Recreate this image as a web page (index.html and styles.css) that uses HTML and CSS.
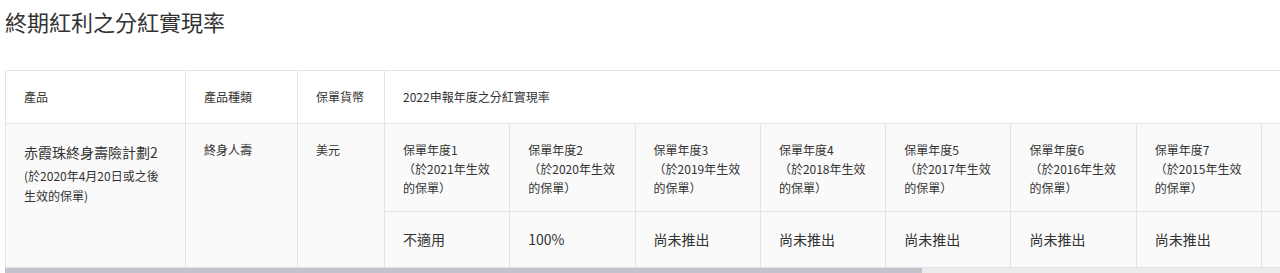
FILE: index.html
```html
<!DOCTYPE html>
<html lang="zh-Hant">
<head>
<meta charset="utf-8">
<title>終期紅利之分紅實現率</title>
<link rel="stylesheet" href="styles.css">
</head>
<body>
<h2 class="title">終期紅利之分紅實現率</h2>
<div class="scroller">
  <table class="rates">
    <colgroup>
      <col class="c-prod"><col class="c-type"><col class="c-cur">
      <col class="c-yr"><col class="c-yr"><col class="c-yr"><col class="c-yr"><col class="c-yr"><col class="c-yr"><col class="c-yr"><col class="c-yr"><col class="c-yr"><col class="c-yr"><col class="c-last">
    </colgroup>
    <thead>
      <tr>
        <th>產品</th>
        <th>產品種類</th>
        <th>保單貨幣</th>
        <th colspan="11">2022申報年度之分紅實現率</th>
      </tr>
    </thead>
    <tbody>
      <tr class="yr-row">
        <td rowspan="2" class="prod">
          <div class="prod-name">赤霞珠終身壽險計劃2</div>
          <div class="prod-note">(於2020年4月20日或之後生效的保單)</div>
        </td>
        <td rowspan="2" class="meta">終身人壽</td>
        <td rowspan="2" class="meta">美元</td>
        <td class="yr">保單年度1<br>（於2021年生效的保單）</td>
        <td class="yr">保單年度2<br>（於2020年生效的保單）</td>
        <td class="yr">保單年度3<br>（於2019年生效的保單）</td>
        <td class="yr">保單年度4<br>（於2018年生效的保單）</td>
        <td class="yr">保單年度5<br>（於2017年生效的保單）</td>
        <td class="yr">保單年度6<br>（於2016年生效的保單）</td>
        <td class="yr">保單年度7<br>（於2015年生效的保單）</td>
        <td class="yr">保單年度8<br>（於2014年生效的保單）</td>
        <td class="yr">保單年度9<br>（於2013年生效的保單）</td>
        <td class="yr">保單年度10<br>（於2012年生效的保單）</td>
        <td class="yr">保單年度11<br>（於2011年生效的保單）</td>
      </tr>
      <tr class="val-row">
        <td class="val">不適用</td>
        <td class="val">100%</td>
        <td class="val">尚未推出</td>
        <td class="val">尚未推出</td>
        <td class="val">尚未推出</td>
        <td class="val">尚未推出</td>
        <td class="val">尚未推出</td>
        <td class="val">尚未推出</td>
        <td class="val">尚未推出</td>
        <td class="val">尚未推出</td>
        <td class="val">尚未推出</td>
      </tr>
    </tbody>
  </table>
</div>
<div class="scroll-track"><div class="scroll-thumb"></div></div>
</body>
</html>
```
FILE: styles.css
```css
html, body {
  margin: 0;
  padding: 0;
  background: #ffffff;
}
body {
  font-family: "Noto Sans CJK TC", "Noto Sans", sans-serif;
  color: #333333;
}
.title {
  margin: 9px 0 36px 5px;
  font-size: 22px;
  line-height: 25px;
  font-weight: 400;
  color: #333333;
}
.scroller {
  margin-left: 5px;
  overflow: hidden;
}
.scroll-track {
  margin-left: 5px;
  height: 5px;
  background: #ececec;
}
.scroll-thumb {
  width: 917px;
  height: 100%;
  background: #c3c3cb;
}
.rates {
  border-collapse: collapse;
  table-layout: fixed;
  width: 1773px;
  font-size: 12px;
  line-height: 20px;
}
.c-prod { width: 180px; }
.c-type { width: 112px; }
.c-cur { width: 87px; }
.c-yr { width: 125.3px; }
.c-last { width: 141px; }
.rates th,
.rates td {
  border: 1px solid #e4e4e4;
  padding: 16px 18px;
  text-align: left;
  font-weight: 400;
}
.rates thead th {
  background: #ffffff;
  vertical-align: middle;
}
.rates tbody td {
  background: #fafafa;
  vertical-align: top;
}
.prod-name {
  font-size: 14px;
  line-height: 24px;
}
.prod-note {
  font-size: 12px;
  line-height: 20px;
  margin-top: 2px;
}
.rates td.yr {
  line-height: 19px;
  padding: 16px 18px 14px;
}
.rates td.val {
  font-size: 14px;
  line-height: 20px;
  padding: 17px 18px 18px;
  vertical-align: middle;
}
```
